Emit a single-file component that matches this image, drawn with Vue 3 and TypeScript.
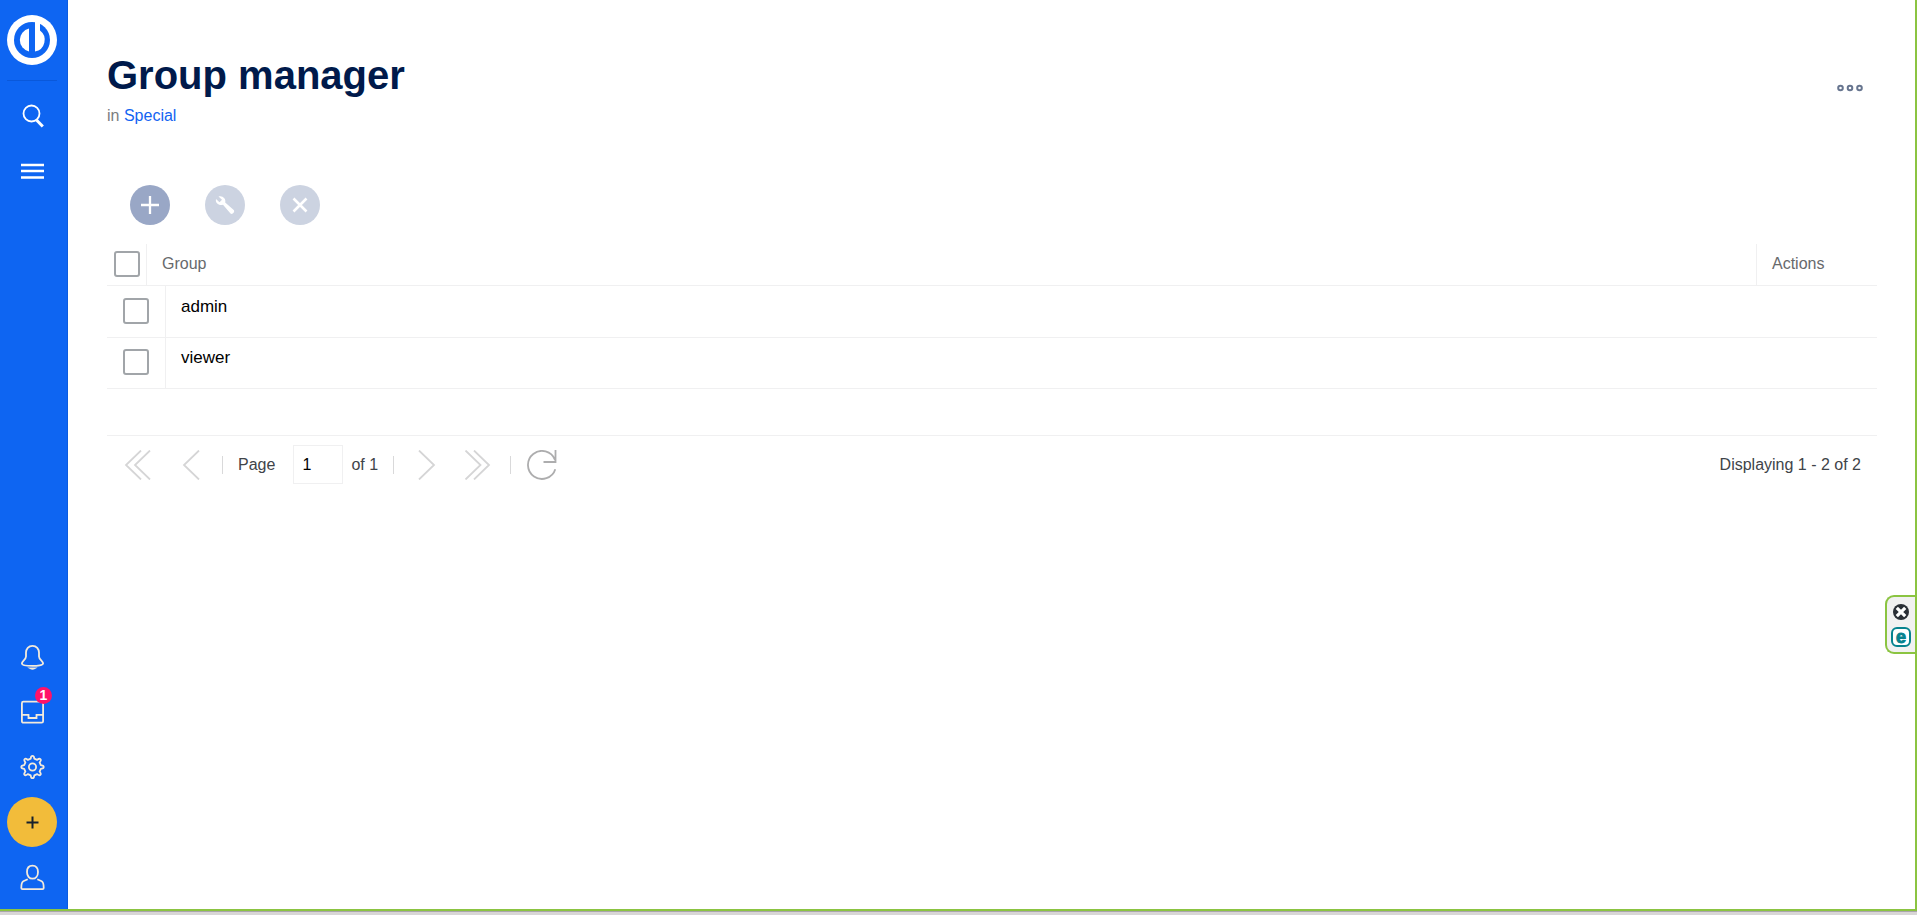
<script setup lang="ts">
import { ref } from 'vue'

interface Group {
  id: number
  name: string
  selected: boolean
}

const groups = ref<Group[]>([
  { id: 1, name: 'admin', selected: false },
  { id: 2, name: 'viewer', selected: false },
])
const page = ref('1')
const allSelected = ref(false)

function toggleAll(): void {
  groups.value.forEach((g) => (g.selected = allSelected.value))
}
</script>

<template>
  <div class="shell">
    <div class="workspace">
      <nav class="sidebar" aria-label="Main">
        <a class="logo" href="#" aria-label="Home">
          <svg width="50" height="50" viewBox="0 0 50 50">
            <circle cx="25" cy="25" r="25" fill="#fff" />
            <circle cx="25" cy="25" r="18" fill="#0e65f2" />
            <path d="M22 13.500A11.800 11.800 0 0 0 22 36.500Z" fill="#fff" />
            <path d="M28 7H33V15.500A11.800 11.800 0 0 1 28 36.500Z" fill="#fff" />
          </svg>
        </a>
        <hr class="rule" />
        <button class="item" type="button" aria-label="Search">
          <svg width="24" height="24" viewBox="0 0 24 24" fill="none" stroke="#fff">
            <circle cx="10.500" cy="9.500" r="8" stroke-width="1.800" />
            <path d="M15.500 16L21.800 22.500" stroke-width="3" />
          </svg>
        </button>
        <button class="item" type="button" aria-label="Menu">
          <svg width="24" height="24" viewBox="0 0 24 24" fill="none" stroke="#fff" stroke-width="2.400">
            <path d="M0 6H23M0 12H23M0 18.500H23" />
          </svg>
        </button>
        <div class="lower">
          <button class="item" type="button" aria-label="Notifications">
            <svg class="line" width="26" height="26" viewBox="0 0 26 26">
              <path d="M12.500 1.800C8.500 1.800 6 4.800 6 8.600V12.500C6 15.500 1.900 17 1.900 19.500C1.900 22.700 23.100 22.700 23.100 19.500C23.100 17 19 15.500 19 12.500V8.600C19 4.800 16.500 1.800 12.500 1.800Z" />
              <path d="M10.500 24.300Q12.500 25.500 14.500 24.300Z" />
            </svg>
          </button>
          <button class="item" type="button" aria-label="Inbox, 1 new">
            <svg class="line" width="26" height="26" viewBox="0 0 26 26">
              <rect x="1.900" y="2.700" width="21.200" height="21" rx="1.500" />
              <path d="M2 15.800H8.500V19H16.500V15.800H23" />
            </svg>
            <span class="badge">1</span>
          </button>
          <button class="item" type="button" aria-label="Settings">
            <svg class="line" width="26" height="26" viewBox="0 0 26 26" stroke-linejoin="round">
              <circle cx="12.500" cy="13" r="3.600" />
              <path transform="translate(-.5 0)" d="M11.200 4.700C11.500 3 11.300 1.800 13 1.800S14.500 3 14.800 4.700L17.600 5.900C19 4.900 19.700 4.100 20.900 5.200S21.100 7 20.100 8.400L21.300 11.200C23 11.500 24.200 11.300 24.200 13S23 14.500 21.300 14.800L20.100 17.600C21.100 19 22 19.700 20.900 20.800S19 21.100 17.600 20.100L14.800 21.300C14.500 23 14.700 24.200 13 24.200S11.500 23 11.200 21.300L8.400 20.100C7 21.100 6.200 21.900 5.100 20.800S4.900 19 5.900 17.600L4.700 14.800C3 14.500 1.800 14.700 1.800 13S3 11.500 4.700 11.200L5.900 8.400C4.900 7 4.100 6.200 5.200 5.100S7 4.900 8.400 5.900Z" />
            </svg>
          </button>
          <button class="item create" type="button" aria-label="Create">
            <svg width="50" height="50" viewBox="0 0 50 50">
              <circle cx="25" cy="25" r="25" fill="#f2bc3a" />
              <path d="M19.500 25.500H31.500M25.500 19.500V31.500" stroke="#16202c" stroke-width="2" />
            </svg>
          </button>
          <button class="item" type="button" aria-label="Account">
            <svg class="line" width="26" height="26" viewBox="0 0 26 26">
              <path d="M12.500 1.600C9 1.600 7 4.200 7 8C7 12 9.300 14.700 12.500 14.700S18 12 18 8C18 4.200 16 1.600 12.500 1.600Z" />
              <path d="M7.700 15.300L3.300 17.300C1.900 18 1.300 19.500 1.300 24Q1.300 25.100 2.500 25.100H22.500Q23.700 25.100 23.700 24C23.700 19.500 23.100 18 21.700 17.300L17.300 15.300" />
            </svg>
          </button>
        </div>
      </nav>

      <main class="content">
        <header class="head">
          <div>
            <h1>Group manager</h1>
            <p class="crumb">in <a href="#">Special</a></p>
          </div>
          <button class="more" type="button" aria-label="More">
            <svg width="26" height="8" viewBox="0 0 26 8" fill="none" stroke="#67758f" stroke-width="2">
              <circle cx="3.500" cy="4" r="2.300" />
              <circle cx="13" cy="4" r="2.300" />
              <circle cx="22.500" cy="4" r="2.300" />
            </svg>
          </button>
        </header>

        <div class="tools">
          <button class="tool" type="button" aria-label="Add group">
            <svg width="40" height="40" viewBox="0 0 40 40" stroke="#fff" stroke-width="2.300">
              <path d="M11 20H29M20 11V29" />
            </svg>
          </button>
          <button class="tool" type="button" disabled aria-label="Edit group">
            <svg width="40" height="40" viewBox="0 0 40 40" fill="#fff">
              <path d="M13.500 11.600C17.500 10.300 21.300 13.800 20.200 17.600L28.700 25C30.300 26.800 27.300 30 25.500 28.500L18 19.800C14 21 10 18 11 14L14.500 17.200L17 14.800Z" />
            </svg>
          </button>
          <button class="tool" type="button" disabled aria-label="Delete group">
            <svg width="40" height="40" viewBox="0 0 40 40" stroke="#fff" stroke-width="2.600">
              <path d="M13.500 13.500L26.500 26.500M26.500 13.500L13.500 26.500" />
            </svg>
          </button>
        </div>

        <table class="grid">
          <colgroup>
            <col class="c-check" />
            <col class="c-indent" />
            <col />
            <col class="c-actions" />
          </colgroup>
          <thead>
            <tr>
              <th class="check">
                <input v-model="allSelected" type="checkbox" aria-label="Select all groups" @change="toggleAll" />
              </th>
              <th class="name" colspan="2">Group</th>
              <th class="actions">Actions</th>
            </tr>
          </thead>
          <tbody>
            <tr v-for="g in groups" :key="g.id">
              <td class="check" colspan="2">
                <input v-model="g.selected" type="checkbox" :aria-label="`Select ${g.name}`" />
              </td>
              <td class="name">{{ g.name }}</td>
              <td></td>
            </tr>
          </tbody>
        </table>

        <footer class="pager">
          <button type="button" class="first" disabled aria-label="First page">
            <svg width="28" height="30" viewBox="0 0 28 30"><path d="M17 .5L2 15L17 29.500M26 .5L11 15L26 29.500" /></svg>
          </button>
          <button type="button" class="prev" disabled aria-label="Previous page">
            <svg width="18" height="30" viewBox="0 0 18 30"><path d="M17 .5L2 15L17 29.500" /></svg>
          </button>
          <span class="sep"></span>
          <label class="page-label" for="page-number">Page</label>
          <input id="page-number" v-model="page" class="page" type="text" />
          <span class="of">of 1</span>
          <span class="sep"></span>
          <button type="button" class="next" disabled aria-label="Next page">
            <svg width="18" height="30" viewBox="0 0 18 30"><path d="M1 .5L16 15L1 29.500" /></svg>
          </button>
          <button type="button" class="last" disabled aria-label="Last page">
            <svg width="28" height="30" viewBox="0 0 28 30"><path d="M1.500.5L16.500 15L1.500 29.500M10 .5L25 15L10 29.500" /></svg>
          </button>
          <span class="sep"></span>
          <button type="button" class="reload" aria-label="Refresh">
            <svg width="30" height="30" viewBox="0 0 30 30">
              <path class="dark" d="M28 9.800A14 14 0 1 0 28.300 19.200M28.500 0V12H16.500" />
            </svg>
          </button>
          <span class="status">Displaying 1 - 2 of 2</span>
        </footer>
      </main>

      <aside class="dock" aria-label="Assistant">
        <button type="button" aria-label="Close">
          <svg width="16" height="16" viewBox="0 0 16 16">
            <circle cx="8" cy="8" r="8" fill="#2a2f36" />
            <path d="M3.800 3.800L12.200 12.200M12.200 3.800L3.800 12.200" stroke="#fff" stroke-width="3.200" />
          </svg>
        </button>
        <button type="button" class="e-mark" aria-label="Open assistant">e</button>
      </aside>
    </div>
    <div class="edge"></div>
  </div>
</template>

<style>
html,
body {
  margin: 0;
  background: #fff;
}
</style>

<style scoped>
.shell {
  display: flex;
  flex-direction: column;
  min-height: 100vh;
  font: 16px/20px "Liberation Sans", Arial, sans-serif;
  color: #404449;
}

.shell *,
.shell *::before {
  box-sizing: border-box;
}

button {
  display: flex;
  align-items: center;
  justify-content: center;
  padding: 0;
  border: 0;
  background: none;
  font: inherit;
  color: inherit;
}

svg {
  display: block;
}

.workspace {
  position: relative;
  display: flex;
  flex: 1;
  border-right: 2px solid #8bc441;
  border-bottom: 2px solid #8bc441;
}

.edge {
  height: 4px;
  border-top: 1px solid #a9a5a9;
  background: #d8d6d6;
}

.sidebar {
  display: flex;
  flex-direction: column;
  flex: none;
  width: 68px;
  padding: 15px 0 5px;
  border-right: 1px solid #0b5be0;
  background: #0e65f2;
}

.logo {
  margin-left: 7px;
}

.rule {
  width: 50px;
  height: 1px;
  margin: 15px 0 7px 7px;
  border: 0;
  background: #0a58da;
}

.item {
  position: relative;
  width: 66px;
  height: 55px;
}

.create {
  width: 64px;
}

.lower {
  margin-top: auto;
}

.line {
  fill: none;
  stroke: #f3eadb;
  stroke-width: 1.8;
}

.badge {
  position: absolute;
  top: 3px;
  left: 35px;
  width: 17px;
  height: 17px;
  border-radius: 50%;
  background: #ff1268;
  color: #fff;
  font-size: 14px;
  font-weight: 700;
  line-height: 17px;
  text-align: center;
}

.content {
  flex: 1;
  min-width: 0;
  padding: 51px 38px 40px 39px;
}

.head {
  display: flex;
  justify-content: space-between;
  align-items: flex-start;
}

h1 {
  margin: 0;
  color: #001a4b;
  font-size: 40px;
  line-height: 48px;
}

.crumb {
  margin: 7px 0 0;
  color: #7b7d80;
}

a {
  color: #1263f2;
  text-decoration: none;
}

.more {
  width: 40px;
  height: 40px;
  margin: 17px 7px 0 0;
}

.tools {
  display: flex;
  gap: 35px;
  padding: 59px 23px 19px;
}

.tool {
  width: 40px;
  height: 40px;
  border-radius: 50%;
  background: #99a7c6;
}

.tool:disabled {
  background: #ccd3e1;
}

.grid {
  width: 100%;
  border-collapse: separate;
  border-spacing: 0;
  table-layout: fixed;
}

.c-check {
  width: 40px;
}

.c-indent {
  width: 19px;
}

.c-actions {
  width: 121px;
}

th,
td {
  padding: 0;
  border-bottom: 1px solid #f0f0f1;
  text-align: left;
  font-weight: 400;
  vertical-align: top;
}

th {
  height: 42px;
  color: #67696c;
}

th.name,
th.actions {
  padding: 10px 15px;
}

th.actions {
  border-left: 1px solid #f0f0f1;
}

th.check,
td.check {
  border-right: 1px solid #f0f0f1;
}

th.check {
  padding: 7px 0 0 7px;
}

td {
  height: 51px;
}

tr:first-child td {
  height: 52px;
}

td.check {
  padding: 11px 0 0 16px;
}

tr:first-child td.check {
  padding-top: 12px;
}

td.name {
  padding: 10px 15px;
  color: #000;
  font-size: 17px;
}

tr:first-child td.name {
  padding-top: 11px;
}

input[type="checkbox"] {
  display: block;
  width: 26px;
  height: 26px;
  margin: 0;
  appearance: none;
  border: 2px solid #a1a5a9;
  border-radius: 3px;
  background: #fff;
}

input[type="checkbox"]:checked {
  background: #0e65f2;
}

.pager {
  display: flex;
  align-items: center;
  height: 58px;
  margin-top: 46px;
  padding: 0 16px 0 17px;
  border-top: 1px solid #f0f0f1;
}

.pager path {
  fill: none;
  stroke: #d5d5d6;
  stroke-width: 1.8;
}

.pager path.dark {
  stroke: #adadae;
}

.sep {
  width: 1px;
  height: 18px;
  background: #d9d9da;
}

.prev {
  margin: 0 22px 0 30px;
}

.page-label {
  margin: 0 18px 0 15px;
}

.page {
  width: 50px;
  height: 39px;
  padding: 0 8px;
  border: 1px solid #f0f0f1;
  background: #fff;
  color: #000;
  font: inherit;
}

.of {
  margin: 0 15px 0 8px;
}

.next {
  margin: 0 28px 0 24px;
}

.last {
  margin-right: 18px;
}

.reload {
  margin-left: 16px;
}

.status {
  margin-left: auto;
}

.dock {
  position: absolute;
  top: 595px;
  right: 0;
  display: flex;
  flex-direction: column;
  align-items: center;
  gap: 7px;
  width: 30px;
  padding: 7px 0 5px;
  border: 2px solid #8bc441;
  border-right: 0;
  border-radius: 9px 0 0 9px;
  background: #f1f1f1;
}

.e-mark {
  width: 20px;
  height: 20px;
  border: 2px solid #07838f;
  border-radius: 6px;
  background: #fff;
  color: #07838f;
  font-size: 18px;
  font-weight: 700;
  line-height: 14px;
  -webkit-text-stroke: 1px #07838f;
}
</style>
